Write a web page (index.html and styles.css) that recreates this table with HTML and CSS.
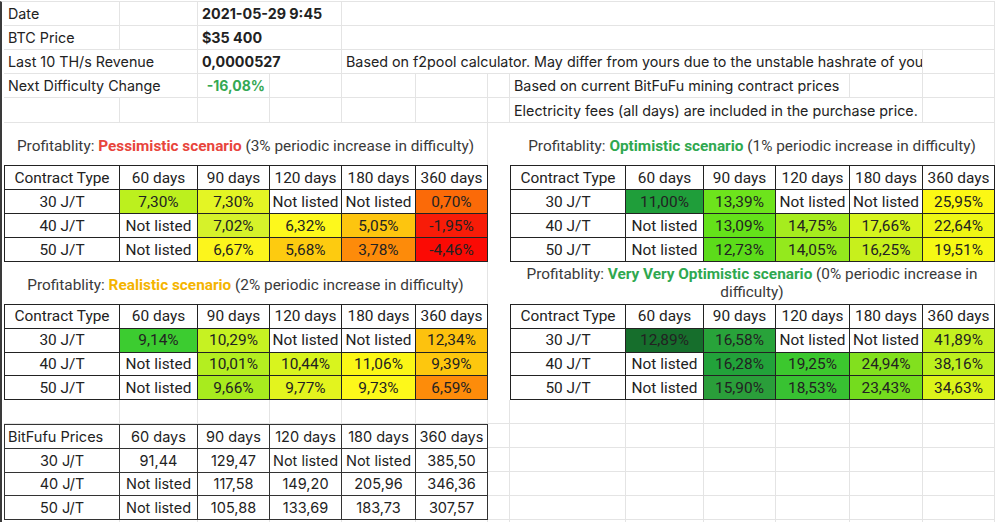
FILE: index.html
```html
<!DOCTYPE html>
<html>
<head>
<meta charset="utf-8">
<link rel="stylesheet" href="styles.css">
</head>
<body>
<div class="sheet">
  <!-- row 1 -->
  <div class="c">Date</div>
  <div class="c"></div>
  <div class="c b s2">2021-05-29 9:45</div>
  <div class="c s9"></div>
  <!-- row 2 -->
  <div class="c">BTC Price</div>
  <div class="c"></div>
  <div class="c b s2">$35 400</div>
  <div class="c s9"></div>
  <!-- row 3 -->
  <div class="c s2">Last 10 TH/s Revenue</div>
  <div class="c b s2">0,0000527</div>
  <div class="c s8">Based on f2pool calculator. May differ from yours due to the unstable hashrate of your pool.</div>
  <div class="c"></div>
  <!-- row 4 -->
  <div class="c s2">Next Difficulty Change</div>
  <div class="c b neg right">-16,08%</div>
  <div class="c"></div><div class="c"></div><div class="c"></div><div class="c"></div>
  <div class="c s4">Based on current BitFuFu mining contract prices</div>
  <div class="c"></div><div class="c"></div>
  <!-- row 5 -->
  <div class="c"></div><div class="c"></div><div class="c"></div><div class="c"></div><div class="c"></div><div class="c"></div><div class="c"></div>
  <div class="c s5">Electricity fees (all days) are included in the purchase price.</div>
  <div class="c"></div>

  <!-- gap column between tables -->
  <div class="gapcol"></div>

  <!-- row 6 titles -->
  <div class="title t-left r6"><span>Profitablity: <b class="red">Pessimistic scenario</b> (3% periodic increase in difficulty)</span></div>
  <div class="title t-right r6"><span>Profitablity: <b class="green">Optimistic scenario</b> (1% periodic increase in difficulty)</span></div>

  <!-- pessimistic -->
  <div class="tbl left-tbl r7">
    <div>Contract Type</div><div>60 days</div><div>90 days</div><div>120 days</div><div>180 days</div><div>360 days</div>
    <div>30 J/T</div><div style="background:#bcf01e">7,30%</div><div style="background:#e4f524">7,30%</div><div>Not listed</div><div>Not listed</div><div style="background:#fb6a08">0,70%</div>
    <div>40 J/T</div><div>Not listed</div><div style="background:#d6f22a">7,02%</div><div style="background:#fdf81c">6,32%</div><div style="background:#fdc50f">5,05%</div><div style="background:#f81c08">-1,95%</div>
    <div>50 J/T</div><div>Not listed</div><div style="background:#fcf51c">6,67%</div><div style="background:#fdcb10">5,68%</div><div style="background:#fd8b0a">3,78%</div><div style="background:#fb0a04">-4,46%</div>
  </div>

  <!-- optimistic -->
  <div class="tbl right-tbl r7">
    <div>Contract Type</div><div>60 days</div><div>90 days</div><div>120 days</div><div>180 days</div><div>360 days</div>
    <div>30 J/T</div><div style="background:#1f9e3a">11,00%</div><div style="background:#6de41c">13,39%</div><div>Not listed</div><div>Not listed</div><div style="background:#fcf814">25,95%</div>
    <div>40 J/T</div><div>Not listed</div><div style="background:#64e21a">13,09%</div><div style="background:#a6ec1e">14,75%</div><div style="background:#d6f41e">17,66%</div><div style="background:#eef614">22,64%</div>
    <div>50 J/T</div><div>Not listed</div><div style="background:#5cdc1a">12,73%</div><div style="background:#94e91d">14,05%</div><div style="background:#c7f01c">16,25%</div><div style="background:#f6f814">19,51%</div>
  </div>

  <!-- row 11 titles -->
  <div class="title t-left r11"><span>Profitablity: <b class="amber">Realistic scenario</b> (2% periodic increase in difficulty)</span></div>
  <div class="title t-right r11 two"><span>Profitablity: <b class="green">Very Very Optimistic scenario</b> (0% periodic increase in<br>difficulty)</span></div>

  <!-- realistic -->
  <div class="tbl left-tbl r12">
    <div>Contract Type</div><div>60 days</div><div>90 days</div><div>120 days</div><div>180 days</div><div>360 days</div>
    <div>30 J/T</div><div style="background:#3ccc30">9,14%</div><div style="background:#c6f222">10,29%</div><div>Not listed</div><div>Not listed</div><div style="background:#fdc20e">12,34%</div>
    <div>40 J/T</div><div>Not listed</div><div style="background:#b4ee20">10,01%</div><div style="background:#d8f41e">10,44%</div><div style="background:#fbf716">11,06%</div><div style="background:#fdc70e">9,39%</div>
    <div>50 J/T</div><div>Not listed</div><div style="background:#a8eb1e">9,66%</div><div style="background:#e3f41e">9,77%</div><div style="background:#fdf81a">9,73%</div><div style="background:#fd8c0a">6,59%</div>
  </div>

  <!-- very very optimistic -->
  <div class="tbl right-tbl r12">
    <div>Contract Type</div><div>60 days</div><div>90 days</div><div>120 days</div><div>180 days</div><div>360 days</div>
    <div>30 J/T</div><div style="background:#166e2c">12,89%</div><div style="background:#28a33a">16,58%</div><div>Not listed</div><div>Not listed</div><div style="background:#c4f020">41,89%</div>
    <div>40 J/T</div><div>Not listed</div><div style="background:#22a23a">16,28%</div><div style="background:#3cc82e">19,25%</div><div style="background:#82e01e">24,94%</div><div style="background:#bdf01e">38,16%</div>
    <div>50 J/T</div><div>Not listed</div><div style="background:#2a9e3a">15,90%</div><div style="background:#38c232">18,53%</div><div style="background:#74dc1e">23,43%</div><div style="background:#dcf41a">34,63%</div>
  </div>

  <!-- row 16 -->
  <div class="c r16"></div><div class="c"></div><div class="c"></div><div class="c"></div><div class="c"></div><div class="c"></div><div class="c"></div>
  <div class="c"></div><div class="c"></div><div class="c"></div><div class="c"></div><div class="c"></div><div class="c"></div>

  <!-- prices -->
  <div class="tbl left-tbl prices r17">
    <div class="lft">BitFufu Prices</div><div>60 days</div><div>90 days</div><div>120 days</div><div>180 days</div><div>360 days</div>
    <div>30 J/T</div><div>91,44</div><div>129,47</div><div>Not listed</div><div>Not listed</div><div>385,50</div>
    <div>40 J/T</div><div>Not listed</div><div>117,58</div><div>149,20</div><div>205,96</div><div>346,36</div>
    <div>50 J/T</div><div>Not listed</div><div>105,88</div><div>133,69</div><div>183,73</div><div>307,57</div>
  </div>

  <div class="c"></div><div class="c"></div><div class="c"></div><div class="c"></div><div class="c"></div><div class="c"></div><div class="c"></div>
  <div class="c"></div><div class="c"></div><div class="c"></div><div class="c"></div><div class="c"></div><div class="c"></div><div class="c"></div>
  <div class="c"></div><div class="c"></div><div class="c"></div><div class="c"></div><div class="c"></div><div class="c"></div><div class="c"></div>
  <div class="c"></div><div class="c"></div><div class="c"></div><div class="c"></div><div class="c"></div><div class="c"></div><div class="c"></div>

  <!-- row 21 -->
  <div class="c"></div><div class="c"></div><div class="c"></div><div class="c"></div><div class="c"></div><div class="c"></div><div class="c"></div>
  <div class="c"></div><div class="c"></div><div class="c"></div><div class="c"></div><div class="c"></div><div class="c"></div>
</div>
</body>
</html>
```

FILE: styles.css
```css
html, body {
  margin: 0;
  padding: 0;
  background: #fff;
  overflow: hidden;
  height: 522px;
}

.sheet {
  display: grid;
  grid-template-columns: 116px 78px 72px 72px 74px 72px 22px 116px 78px 72px 74px 73px 72px;
  grid-template-rows: 24px 24px 24px 24px 25px 42px 25px 24px 24px 24px 42px 24px 24px 24px 24px 24px 24px 24px 24px 24px 24px;
  border-left: 2px solid #3a3a3a;
  padding-left: 2px;
  border-top: 1px solid #e4e4e4;
  margin-top: 1px;
  font-family: "Inter", "Liberation Sans", sans-serif;
  font-size: 14.3px;
  color: #222;
  width: 991px;
}

.c {
  border-right: 1px solid #e4e4e4;
  border-bottom: 1px solid #e4e4e4;
  padding: 0 4px;
  display: flex;
  align-items: center;
  white-space: nowrap;
  overflow: hidden;
  min-width: 0;
}

.b { font-weight: 700; }
.right { justify-content: flex-end; }
.neg { color: #34a853; font-size: 14px; }

.s2 { grid-column: span 2; }
.s4 { grid-column: span 4; }
.s5 { grid-column: span 5; }
.s8 { grid-column: span 8; }
.s9 { grid-column: span 9; }

.gapcol {
  grid-column: 7;
  grid-row: 6 / 16;
}

.title {
  font-family: "Roboto", "Liberation Sans", sans-serif;
  font-size: 15.35px;
  color: #3a3a3a;
  display: flex;
  align-items: center;
  justify-content: center;
  text-align: center;
  line-height: 18px;
  border-right: 1px solid #e4e4e4;
  padding-top: 3px;
}
.title b { font-weight: 700; }
.t-left { grid-column: 1 / 7; }
.t-right { grid-column: 8 / 14; }
.r6 { grid-row: 6; }
.r11 { grid-row: 11; }
.two { padding-top: 0; }

.red { color: #e8453c; }
.green { color: #2fa84f; }
.amber { color: #f4b400; }

.tbl {
  display: grid;
  grid-template-rows: repeat(4, 1fr);
  border-top: 1px solid #222;
  border-left: 1px solid #222;
  font-family: "Roboto", "Liberation Sans", sans-serif;
  font-size: 15.4px;
  color: #222;
}
.tbl > div {
  border-right: 1px solid #222;
  border-bottom: 1px solid #222;
  display: flex;
  align-items: center;
  justify-content: center;
  white-space: nowrap;
  overflow: hidden;
}
.left-tbl {
  grid-column: 1 / 7;
  grid-template-columns: 115px 78px 72px 72px 74px 72px;
}
.right-tbl {
  grid-column: 8 / 14;
  grid-template-columns: 115px 78px 72px 74px 73px 72px;
}
.r7 { grid-row: 7 / 11; }
.r12 { grid-row: 12 / 16; }
.r16 { grid-row: 16; grid-column: 1; }
.r17 { grid-row: 17 / 21; }

.prices {
  font-family: "Inter", "Liberation Sans", sans-serif;
  font-size: 14.5px;
  border-color: #333;
}
.prices > div { border-color: #333; }
.prices > .lft { justify-content: flex-start; padding-left: 3px; }
```
